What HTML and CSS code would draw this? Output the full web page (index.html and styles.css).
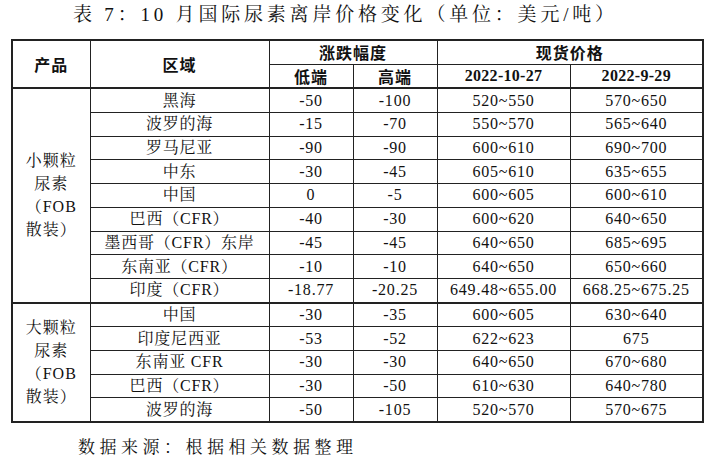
FILE: index.html
```html
<!DOCTYPE html>
<html lang="zh-CN">
<head>
<meta charset="utf-8">
<title>表7</title>
<link rel="stylesheet" href="styles.css">
</head>
<body>
<div class="page">
  <h1 class="title">表 7：10 月国际尿素离岸价格变化（单位：美元/吨）</h1>
  <table class="tbl">
    <colgroup>
      <col class="c1"><col class="c2"><col class="c3"><col class="c4"><col class="c5"><col class="c6">
    </colgroup>
    <thead>
      <tr>
        <th rowspan="2" class="cn">产品</th>
        <th rowspan="2" class="cn">区域</th>
        <th colspan="2" class="cn">涨跌幅度</th>
        <th colspan="2" class="cn">现货价格</th>
      </tr>
      <tr class="hdr2">
        <th class="cn">低端</th>
        <th class="cn">高端</th>
        <th class="num">2022-10-27</th>
        <th class="num">2022-9-29</th>
      </tr>
    </thead>
    <tbody class="grp">
      <tr><td rowspan="9" class="prod">小颗粒<br>尿素<br>（FOB<br>散装）</td><td>黑海</td><td>-50</td><td>-100</td><td>520~550</td><td>570~650</td></tr>
      <tr><td>波罗的海</td><td>-15</td><td>-70</td><td>550~570</td><td>565~640</td></tr>
      <tr><td>罗马尼亚</td><td>-90</td><td>-90</td><td>600~610</td><td>690~700</td></tr>
      <tr><td>中东</td><td>-30</td><td>-45</td><td>605~610</td><td>635~655</td></tr>
      <tr><td>中国</td><td>0</td><td>-5</td><td>600~605</td><td>600~610</td></tr>
      <tr><td>巴西（CFR）</td><td>-40</td><td>-30</td><td>600~620</td><td>640~650</td></tr>
      <tr><td>墨西哥（CFR）东岸</td><td>-45</td><td>-45</td><td>640~650</td><td>685~695</td></tr>
      <tr><td>东南亚（CFR）</td><td>-10</td><td>-10</td><td>640~650</td><td>650~660</td></tr>
      <tr><td>印度（CFR）</td><td>-18.77</td><td>-20.25</td><td>649.48~655.00</td><td>668.25~675.25</td></tr>
    </tbody>
    <tbody class="grp">
      <tr><td rowspan="5" class="prod">大颗粒<br>尿素<br>（FOB<br>散装）</td><td>中国</td><td>-30</td><td>-35</td><td>600~605</td><td>630~640</td></tr>
      <tr><td>印度尼西亚</td><td>-53</td><td>-52</td><td>622~623</td><td>675</td></tr>
      <tr><td>东南亚 CFR</td><td>-30</td><td>-30</td><td>640~650</td><td>670~680</td></tr>
      <tr><td>巴西（CFR）</td><td>-30</td><td>-50</td><td>610~630</td><td>640~780</td></tr>
      <tr><td>波罗的海</td><td>-50</td><td>-105</td><td>520~570</td><td>570~675</td></tr>
    </tbody>
  </table>
  <p class="source">数据来源：根据相关数据整理</p>
</div>
</body>
</html>
```
FILE: styles.css
```css
html, body {
  margin: 0;
  padding: 0;
  background: #ffffff;
}
body {
  color: #111;
  font-family: "Liberation Serif", "Noto Serif CJK SC", "Noto Sans CJK SC", serif;
}
.page {
  width: 709px;
  height: 463px;
  overflow: hidden;
}
.title {
  margin: 0;
  padding: 4px 0 0 73px;
  height: 35px;
  box-sizing: border-box;
  font-size: 19px;
  font-weight: normal;
  line-height: 22px;
  letter-spacing: 3.8px;
  white-space: nowrap;
}
.tbl {
  margin: 4px 0 0 11px;
  border-collapse: collapse;
  border: 2px solid #222;
  table-layout: fixed;
  width: 693px;
}
.c1 { width: 78px; }
.c2 { width: 179px; }
.c3 { width: 84px; }
.c4 { width: 84px; }
.c5 { width: 133px; }
.c6 { width: 133px; }
.tbl th, .tbl td {
  border: 1px solid #222;
  padding: 0;
  height: 22.7px;
  text-align: center;
  vertical-align: middle;
  font-size: 16px;
  line-height: 20px;
  white-space: nowrap;
  letter-spacing: 0.8px;
}
.tbl th.cn {
  font-family: "Noto Sans CJK SC", sans-serif;
  font-weight: bold;
  font-size: 16px;
  letter-spacing: 1px;
}
.tbl th.num {
  font-family: "Liberation Serif", serif;
  font-weight: bold;
  font-size: 16px;
  letter-spacing: 0.3px;
}
.hdr2 th {
  border-bottom: 2px solid #222;
}
.grp {
  border-top: 2px solid #222;
}
.tbl td.prod {
  white-space: normal;
  text-align: center;
  line-height: 23px;
  letter-spacing: 1px;
}
.source {
  margin: 0;
  padding: 14px 0 0 78px;
  font-size: 17px;
  line-height: 22px;
  letter-spacing: 4.5px;
  white-space: nowrap;
}
```
